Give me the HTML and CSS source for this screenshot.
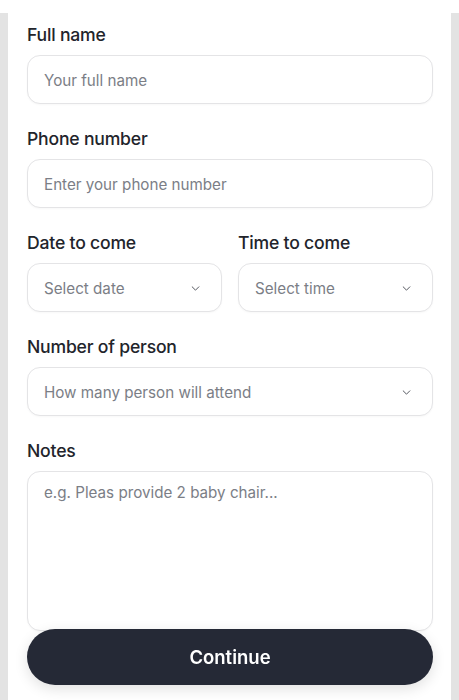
FILE: index.html
```html
<!DOCTYPE html>
<html lang="en">
<head>
<meta charset="utf-8">
<title>Reservation form</title>
<link rel="stylesheet" href="styles.css">
</head>
<body>
<div class="frame">
  <form class="panel">
    <div class="field">
      <label class="label">Full name</label>
      <div class="input"><span class="ph">Your full name</span></div>
    </div>
    <div class="field">
      <label class="label">Phone number</label>
      <div class="input"><span class="ph">Enter your phone number</span></div>
    </div>
    <div class="row">
      <div class="field">
        <label class="label">Date to come</label>
        <div class="input select"><span class="ph">Select date</span>
          <svg class="chev" viewBox="0 0 10 6" width="9" height="5"><path d="M1 1l4 4 4-4" fill="none" stroke="#555860" stroke-width="1.2" stroke-linecap="round" stroke-linejoin="round"/></svg>
        </div>
      </div>
      <div class="field">
        <label class="label">Time to come</label>
        <div class="input select"><span class="ph">Select time</span>
          <svg class="chev" viewBox="0 0 10 6" width="9" height="5"><path d="M1 1l4 4 4-4" fill="none" stroke="#555860" stroke-width="1.2" stroke-linecap="round" stroke-linejoin="round"/></svg>
        </div>
      </div>
    </div>
    <div class="field">
      <label class="label">Number of person</label>
      <div class="input select"><span class="ph">How many person will attend</span>
        <svg class="chev" viewBox="0 0 10 6" width="9" height="5"><path d="M1 1l4 4 4-4" fill="none" stroke="#555860" stroke-width="1.2" stroke-linecap="round" stroke-linejoin="round"/></svg>
      </div>
    </div>
    <div class="field">
      <label class="label">Notes</label>
      <div class="input textarea"><span class="ph">e.g. Pleas provide 2 baby chair...</span></div>
    </div>
  </form>
</div>
<div class="footer">
  <button class="btn" type="button">Continue</button>
</div>
</body>
</html>
```

FILE: styles.css
```css
* { box-sizing: border-box; }
html, body { margin: 0; padding: 0; background: #fff; }
body {
  font-family: Inter, "Noto Sans", "Liberation Sans", sans-serif;
  color: #1f2128;
  height: 700px;
  overflow: hidden;
}
.frame {
  margin-top: 13px;
  background: #e3e3e3;
  padding: 0 8px;
  height: 687px;
}
.panel {
  background: #fff;
  height: 100%;
  padding: 11px 18px 0 19px;
  display: flex;
  flex-direction: column;
  gap: 24px;
}
.field {
  display: flex;
  flex-direction: column;
  gap: 9px;
  min-width: 0;
}
.row {
  display: grid;
  grid-template-columns: 1fr 1fr;
  gap: 16px;
}
.label {
  font-size: 17.6px;
  line-height: 22px;
  font-weight: 450;
  color: #22242b;
  letter-spacing: -0.2px;
}
.input {
  height: 49px;
  border: 1px solid #e4e4e6;
  border-radius: 13px;
  background: #fff;
  display: flex;
  align-items: center;
  padding: 2px 16px 0;
  box-shadow: 0 1px 2px rgba(0,0,0,0.03);
}
.select { justify-content: space-between; padding-right: 21px; }
.ph {
  font-size: 15.2px;
  color: #7b7e86;
  white-space: nowrap;
}
.chev { flex: none; }
.textarea {
  height: 160px;
  align-items: flex-start;
  padding-top: 11px;
}
.footer {
  position: fixed;
  left: 27px;
  right: 26px;
  bottom: 15px;
}
.btn {
  width: 100%;
  height: 56px;
  border: none;
  border-radius: 28px;
  background: #252936;
  color: #fff;
  font-family: inherit;
  font-size: 18.5px;
  font-weight: 600;
  box-shadow: 0 4px 14px rgba(0,0,0,0.12);
}
```
